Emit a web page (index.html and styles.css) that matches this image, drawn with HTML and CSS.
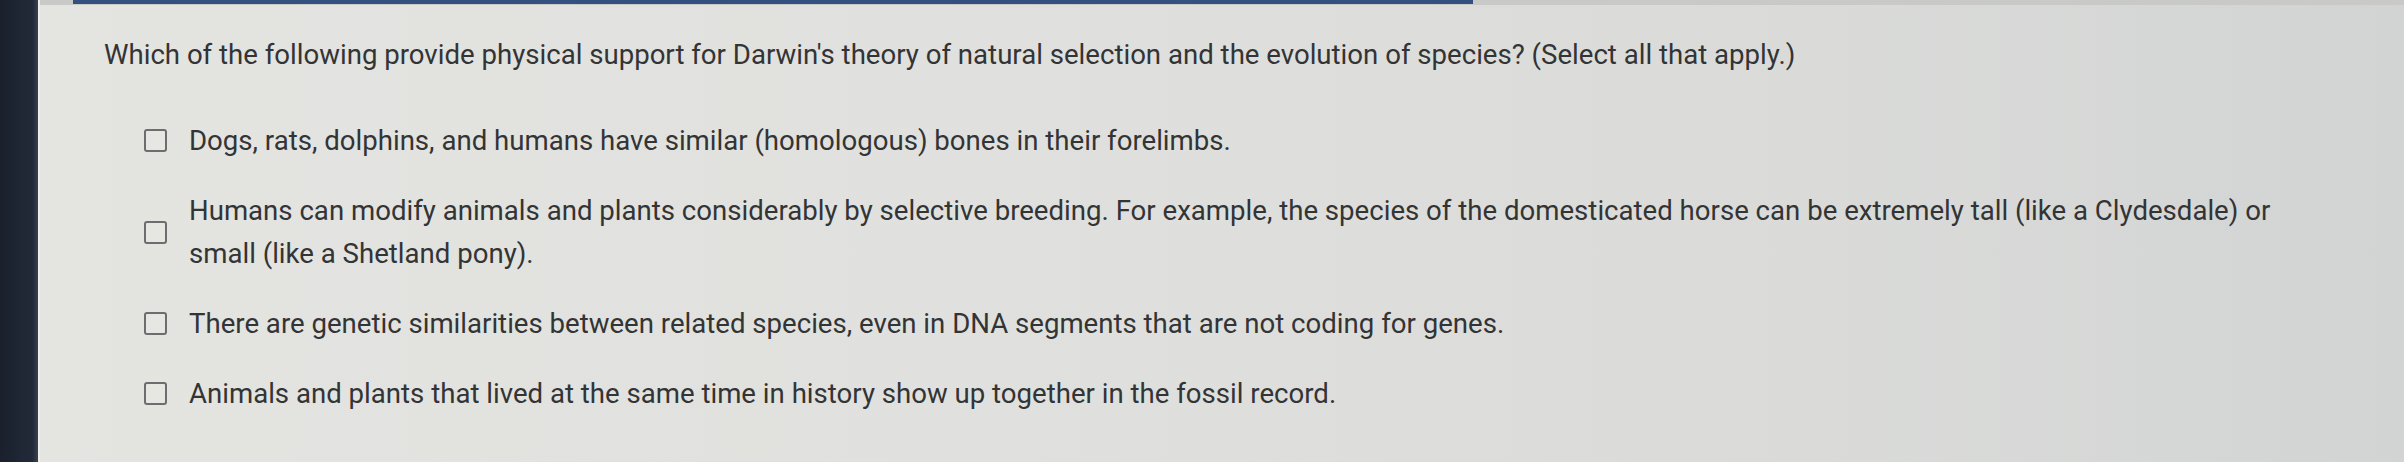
FILE: index.html
```html
<!DOCTYPE html>
<html lang="en">
<head>
<meta charset="utf-8">
<link rel="stylesheet" href="styles.css">
<title>Question</title>
</head>
<body>
<div class="screen">
  <div class="side"></div>
  <main class="panel">
    <div class="topbar"><div class="topbar-blue"></div></div>
    <div class="content">
      <p class="question">Which of the following provide physical support for Darwin's theory of natural selection and the evolution of species? (Select all that apply.)</p>
      <ul class="options">
        <li class="option"><span class="box"></span><span class="label">Dogs, rats, dolphins, and humans have similar (homologous) bones in their forelimbs.</span></li>
        <li class="option"><span class="box"></span><span class="label">Humans can modify animals and plants considerably by selective breeding. For example, the species of the domesticated horse can be extremely tall (like a Clydesdale) or small (like a Shetland pony).</span></li>
        <li class="option"><span class="box"></span><span class="label">There are genetic similarities between related species, even in DNA segments that are not coding for genes.</span></li>
        <li class="option"><span class="box"></span><span class="label">Animals and plants that lived at the same time in history show up together in the fossil record.</span></li>
      </ul>
    </div>
  </main>
</div>
</body>
</html>
```
FILE: styles.css
```css
html, body {
  margin: 0;
  padding: 0;
  width: 2404px;
  height: 462px;
  overflow: hidden;
}
body {
  font-family: Roboto, "Liberation Sans", sans-serif;
  color: #333435;
}
.screen {
  display: flex;
  width: 2404px;
  height: 462px;
}
.side {
  width: 38px;
  flex: none;
  background: linear-gradient(90deg, #1a202c 0%, #222a39 85%, #3a4150 100%);
}
.panel {
  flex: 1;
  display: flex;
  flex-direction: column;
  background: linear-gradient(90deg, #e4e4e1 0%, #e0e1de 40%, #dadbd9 75%, #d2d4d4 100%);
  border-left: 2px solid #eeeeec;
}
.topbar {
  height: 5px;
  flex: none;
  background: #c9cac8;
  padding-left: 33px;
}
.topbar-blue {
  width: 1400px;
  height: 4px;
  background: #34507f;
}
.content {
  padding: 30px 0 0 64px;
}
.question {
  margin: 0;
  font-size: 27.6px;
  line-height: 40px;
}
.options {
  list-style: none;
  margin: 44px 0 0;
  padding: 0 0 0 40px;
  width: 2150px;
  display: flex;
  flex-direction: column;
  gap: 27px;
}
.option {
  display: flex;
  align-items: center;
  gap: 22px;
}
.box {
  flex: none;
  width: 19px;
  height: 19px;
  border: 2px solid #6c6d6e;
  border-radius: 3px;
  background: #e6e6e3;
}
.label {
  font-size: 27.6px;
  line-height: 43px;
}
```
